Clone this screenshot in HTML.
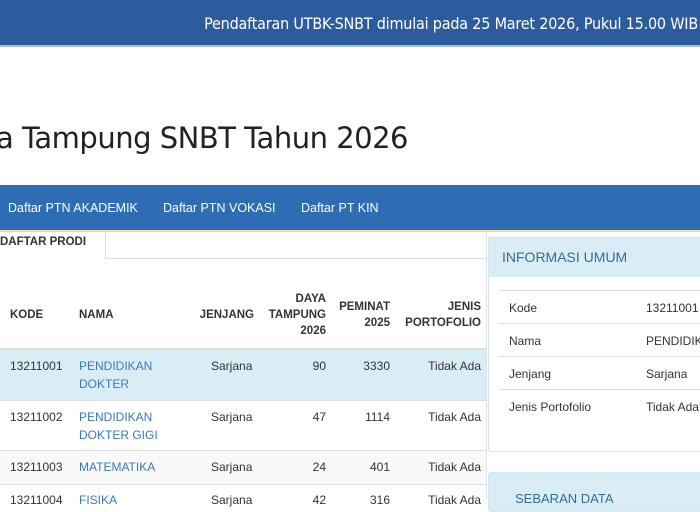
<!DOCTYPE html>
<html><head><style>
*{margin:0;padding:0;box-sizing:border-box}
body{width:700px;height:500px;overflow:hidden;background:#fff;font-family:"Liberation Sans",sans-serif;position:relative;color:#333}
.top{position:absolute;left:0;top:0;width:700px;height:47px;background:#2d5c9c;color:#fff;font-size:15px;border-bottom:2px solid #a9c0dc}
.top span{position:absolute;right:2px;top:14px;font-family:"DejaVu Sans Condensed","DejaVu Sans",sans-serif;font-size:16px;letter-spacing:-0.2px}
h1{position:absolute;left:-4px;top:121px;font-weight:normal;font-size:29px;color:#222;font-family:"DejaVu Sans","Liberation Sans",sans-serif;letter-spacing:-0.5px}
.nav{position:absolute;left:0;top:185px;width:700px;height:47px;background:#2e6db4;border-bottom:2px solid #e8e0a0}
.nav a{position:absolute;top:16px;color:#fff;font-size:12.5px}
.tab{position:absolute;left:0;top:233px;width:106px;height:26px;border-right:1px solid #ddd;font-weight:bold;font-size:11.5px;padding:3px 0 0 0}
.tabline{position:absolute;left:106px;top:258px;width:380px;border-top:1px solid #ddd}
.vline{position:absolute;left:486px;top:232px;height:268px;border-left:1px solid #e3e3e3}
.th{position:absolute;font-weight:bold;font-size:11.5px;line-height:16px;text-align:right}
.row{position:absolute;left:0;width:486px;border-top:1px solid #ddd}
.c{position:absolute;font-size:12px;line-height:18px}
.r{text-align:right}
.link{color:#3a7ab8}
.panel{position:absolute;left:488px;width:220px;border:1px solid #d4e6ef;border-radius:3px}
.ph{background:#d9edf7;height:39px;color:#31708f;font-size:14px;padding:11px 0 0 13px}
.pr{position:absolute;left:10px;width:210px;border-top:1px solid #ddd;font-size:12px;height:33px}
.pr span{position:absolute;top:10px}
</style></head><body>
<div class="top"><span>Pendaftaran UTBK-SNBT dimulai pada 25 Maret 2026, Pukul 15.00 WIB</span></div>
<h1>a Tampung SNBT Tahun 2026</h1>
<div class="nav"><a style="left:8px">Daftar PTN AKADEMIK</a><a style="left:163px">Daftar PTN VOKASI</a><a style="left:301px">Daftar PT KIN</a></div>
<div class="tab">DAFTAR PRODI</div><div class="tabline"></div>
<div class="vline"></div>
<div class="th" style="left:10px;top:307px;text-align:left">KODE</div>
<div class="th" style="left:79px;top:307px;text-align:left">NAMA</div>
<div class="th" style="left:180px;width:74px;top:307px">JENJANG</div>
<div class="th" style="left:256px;width:70px;top:291px">DAYA<br>TAMPUNG<br>2026</div>
<div class="th" style="left:330px;width:60px;top:299px">PEMINAT<br>2025</div>
<div class="th" style="left:395px;width:86px;top:299px">JENIS<br>PORTOFOLIO</div>

<div class="row" style="top:348px;height:52px;background:#d9edf7;border-top:2px solid #ddd"></div>
<div class="c" style="left:10px;top:357px">13211001</div><div class="c link" style="left:79px;top:357px">PENDIDIKAN<br>DOKTER</div>
<div class="c" style="left:211px;top:357px">Sarjana</div><div class="c r" style="left:276px;width:50px;top:357px">90</div><div class="c r" style="left:340px;width:50px;top:357px">3330</div><div class="c r" style="left:400px;width:81px;top:357px">Tidak Ada</div>

<div class="row" style="top:400px;height:50px"></div>
<div class="c" style="left:10px;top:408px">13211002</div><div class="c link" style="left:79px;top:408px">PENDIDIKAN<br>DOKTER GIGI</div>
<div class="c" style="left:211px;top:408px">Sarjana</div><div class="c r" style="left:276px;width:50px;top:408px">47</div><div class="c r" style="left:340px;width:50px;top:408px">1114</div><div class="c r" style="left:400px;width:81px;top:408px">Tidak Ada</div>

<div class="row" style="top:450px;height:34px;background:#f9f9f9"></div>
<div class="c" style="left:10px;top:458px">13211003</div><div class="c link" style="left:79px;top:458px">MATEMATIKA</div>
<div class="c" style="left:211px;top:458px">Sarjana</div><div class="c r" style="left:276px;width:50px;top:458px">24</div><div class="c r" style="left:340px;width:50px;top:458px">401</div><div class="c r" style="left:400px;width:81px;top:458px">Tidak Ada</div>

<div class="row" style="top:484px;height:20px"></div>
<div class="c" style="left:10px;top:491px">13211004</div><div class="c link" style="left:79px;top:491px">FISIKA</div>
<div class="c" style="left:211px;top:491px">Sarjana</div><div class="c r" style="left:276px;width:50px;top:491px">42</div><div class="c r" style="left:340px;width:50px;top:491px">316</div><div class="c r" style="left:400px;width:81px;top:491px">Tidak Ada</div>

<div class="panel" style="top:237px;height:215px">
<div class="ph">INFORMASI UMUM</div>
<div class="pr" style="top:52px"><span style="left:10px">Kode</span><span style="left:147px">13211001</span></div>
<div class="pr" style="top:85px"><span style="left:10px">Nama</span><span style="left:147px">PENDIDIKAN</span></div>
<div class="pr" style="top:118px"><span style="left:10px">Jenjang</span><span style="left:147px">Sarjana</span></div>
<div class="pr" style="top:151px"><span style="left:10px">Jenis Portofolio</span><span style="left:147px">Tidak Ada</span></div>
</div>
<div class="panel" style="top:472px;height:40px;background:#d9edf7"><div style="position:absolute;left:26px;top:18px;color:#31708f;font-size:13px">SEBARAN DATA</div></div>
</body></html>
